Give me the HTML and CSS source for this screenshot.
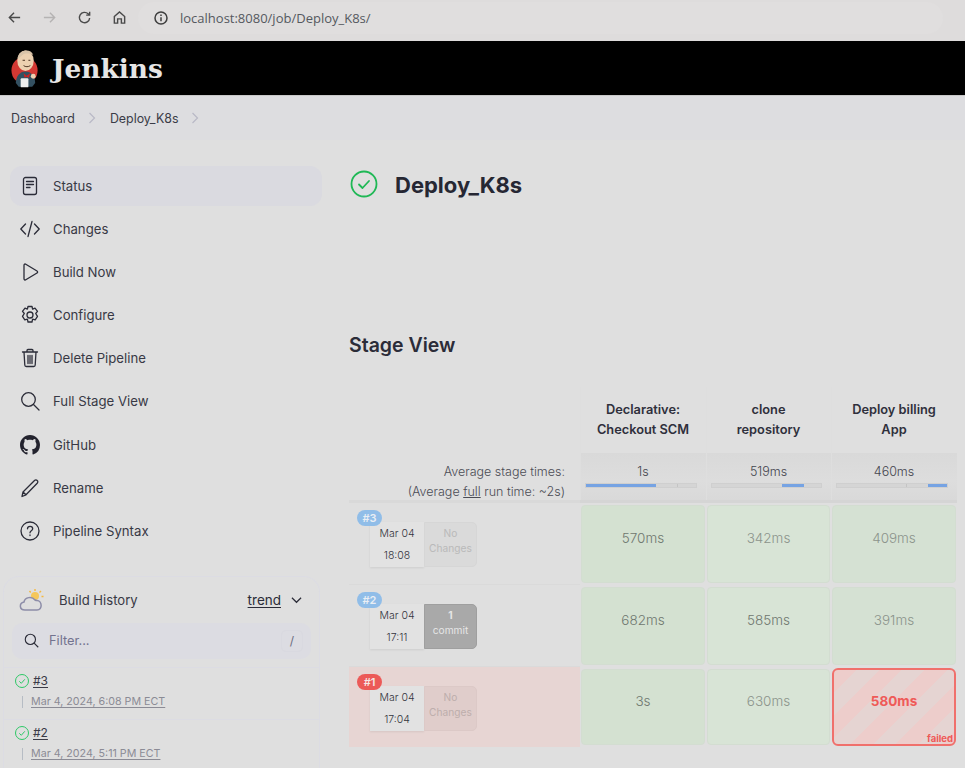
FILE: index.html
```html
<!doctype html>
<html>
  <head>
    <meta charset="utf-8">
    <meta name="viewport" content="width=device-width, initial-scale=1.0">
    <title>Deploy_K8s [Jenkins]</title>
    <link rel="stylesheet" href="styles.css">
  </head>
  <body>
    <!-- browser toolbar -->
    <div class="browser-bar">
      <svg class="nav-icon" viewBox="0 0 16 16"><path d="M14 8H2.500M7.500 3l-5 5 5 5"/></svg>
      <svg class="nav-icon nav-off" viewBox="0 0 16 16"><path d="M2 8h11.500M8.500 3l5 5-5 5"/></svg>
      <svg class="nav-icon" viewBox="0 0 16 16"><path d="M13.500 8.500a5.500 5.500 0 1 1-1.600-4.400L13.500 5.500M13.500 1.800v3.700H9.800"/></svg>
      <svg class="nav-icon" viewBox="0 0 16 16"><path d="M2.500 7L8 2l5.500 5v7H10V9.500H6V14H2.500z"/></svg>
      <div class="url-box">
        <svg class="url-info" viewBox="0 0 16 16"><circle cx="8" cy="8" r="6"/><path d="M8 7.200v4M8 4.500v1.400"/></svg>
        <span class="url-host">localhost:8080/job/Deploy_K8s/</span>
      </div>
    </div>

    <header class="top-bar">
      <svg class="logo" viewBox="0 0 30 40">
        <ellipse cx="14" cy="22" rx="13.500" ry="14" fill="#d33833"/>
        <path d="M5 35c0-7 4-12 10-12s10 5 10 12l-3 4H8z" fill="#335061"/>
        <path d="M13 25l3 2.500 4-2.500-1.500 4.500-2.500-1-2 1z" fill="#c22"/>
        <ellipse cx="15" cy="12" rx="8.500" ry="10.500" fill="#ecd0b0"/>
        <path d="M7 10c0-6 5-8.500 9-8.500 3 0 6 1.500 7 4.500-4-2-9-2-11 0-2 1-3 3-5 4z" fill="#d9c3a8"/>
        <path d="M12 11.500h2.500M18 11.500h2M13 17c2 1.500 5 1.500 7 0" stroke="#49311f" stroke-width="1" fill="none"/>
        <rect x="10" y="30" width="8" height="9.500" rx="1" fill="#eee"/>
        <circle cx="23" cy="28" r="2.500" fill="#ecd0b0"/>
      </svg>
      <span class="brand">Jenkins</span>
    </header>

    <nav class="crumbs">
      <span>Dashboard</span>
      <svg class="crumb-sep" viewBox="0 0 8 12"><path d="M1.500 1l5 5-5 5"/></svg>
      <span>Deploy_K8s</span>
      <svg class="crumb-sep" viewBox="0 0 8 12"><path d="M1.500 1l5 5-5 5"/></svg>
    </nav>

    <div class="page">
      <aside class="side">
        <ul class="tasks">
          <li class="task task-active">
            <svg class="ico" viewBox="0 0 20 20"><rect x="3.500" y="1.500" width="13" height="17" rx="2"/><path d="M6.500 5.500h7M6.500 8.500h7M6.500 11.500h3.500"/></svg>
            Status
          </li>
          <li class="task">
            <svg class="ico" viewBox="0 0 20 20"><path d="M5.500 5L0.800 10l4.700 5M14.500 5l4.700 5-4.700 5M12 2.500L8 17.500"/></svg>
            Changes
          </li>
          <li class="task">
            <svg class="ico" viewBox="0 0 20 20"><path d="M4 3.200c0-1 1-1.500 1.800-1L17 9c.8.500.8 1.500 0 2L5.800 17.800c-.8.500-1.800 0-1.800-1z"/></svg>
            Build Now
          </li>
          <li class="task">
            <svg class="ico" viewBox="0 0 20 20"><circle cx="10" cy="10" r="3"/><path d="M8 1.500h4l.6 2.600 2.400-1 2.500 3.300-1.800 2.100 1.800 2.900-2.300 3.500-2.600-.8-.6 2.900H8l-.6-2.900-2.600.8-2.300-3.500 1.800-2.900-1.800-2.100L5 3.100l2.400 1z"/></svg>
            Configure
          </li>
          <li class="task">
            <svg class="ico" viewBox="0 0 20 20"><path d="M2.500 4h15M7 4V2.500C7 2 7.500 1.500 8 1.500h4c.5 0 1 .5 1 1V4M4 4l.8 13c0 .8.700 1.500 1.500 1.500h7.400c.8 0 1.500-.7 1.500-1.500L16 4M8 7.500v8M10 7.500v8M12 7.500v8"/></svg>
            Delete Pipeline
          </li>
          <li class="task">
            <svg class="ico" viewBox="0 0 20 20"><circle cx="8.500" cy="8.500" r="6.800"/><path d="M13.500 13.500l5.500 5.500"/></svg>
            Full Stage View
          </li>
          <li class="task">
            <svg class="ico ico-solid" viewBox="0 0 16 16"><path d="M8 0C3.580 0 0 3.580 0 8c0 3.540 2.290 6.530 5.470 7.590.4.070.55-.17.55-.38 0-.19-.01-.82-.01-1.490-2.010.37-2.530-.49-2.690-.94-.09-.23-.48-.94-.82-1.130-.28-.15-.68-.52-.01-.53.63-.01 1.080.58 1.230.82.720 1.210 1.870.870 2.330.660.070-.520.280-.870.510-1.070-1.780-.2-3.640-.890-3.640-3.950 0-.870.310-1.590.820-2.150-.080-.2-.360-1.020.080-2.120 0 0 .670-.210 2.200.820.640-.180 1.320-.270 2-.270s1.360.090 2 .270c1.530-1.040 2.200-.820 2.200-.820.440 1.100.160 1.920.080 2.120.510.560.820 1.270.820 2.150 0 3.070-1.870 3.750-3.650 3.950.290.250.540.730.540 1.480 0 1.070-.010 1.930-.010 2.200 0 .210.150.460.550.380A8.010 8.010 0 0 0 16 8c0-4.420-3.580-8-8-8z"/></svg>
            GitHub
          </li>
          <li class="task">
            <svg class="ico" viewBox="0 0 20 20"><path d="M2 18.500l1-4.500L14.500 2.500c.8-.8 2-.8 2.700 0 .8.700.8 1.900 0 2.700L6 16.800zM3 14l3 2.800"/></svg>
            Rename
          </li>
          <li class="task">
            <svg class="ico" viewBox="0 0 20 20"><circle cx="10" cy="10" r="9"/><path d="M7.500 7.800c0-3.200 5.200-3.200 5.200 0 0 2-2.700 2-2.700 4M10 14v.6"/></svg>
            Pipeline Syntax
          </li>
        </ul>

        <section class="history">
          <div class="history-head">
            <svg class="weather" viewBox="0 0 26 24">
              <g stroke="#f5b83d" stroke-width="1.400" fill="none">
                <circle cx="16" cy="8" r="4" fill="#f5c75a" stroke="none"/>
                <path d="M16 1v2M22 3l-1.500 1.500M24.500 8.500h-2M10.500 3l1.200 1.500"/>
              </g>
              <path d="M6 22c-6 0-6-7-1-8 1-5 8-6 11-2 0 0 1 .5 2 .5 5 0 6 9.500 0 9.500z" fill="#dedede" stroke="#8d8da8" stroke-width="1.500"/>
            </svg>
            <span class="history-title">Build History</span>
            <span class="trend">trend</span>
            <svg class="chev" viewBox="0 0 12 8"><path d="M1 1.500l5 5 5-5"/></svg>
          </div>
          <div class="filter">
            <svg class="filter-ico" viewBox="0 0 20 20"><circle cx="8.500" cy="8.500" r="6.800"/><path d="M13.500 13.500l5.500 5.500"/></svg>
            <span class="filter-text">Filter...</span>
            <span class="filter-key">/</span>
          </div>
          <div class="build">
            <div class="build-top">
              <svg class="ok-small" viewBox="0 0 16 16"><circle cx="8" cy="8" r="6.500"/><path d="M5.300 8.300l2 2 3.500-4"/></svg>
              <span class="build-no">#3</span>
            </div>
            <div class="build-date">Mar 4, 2024, 6:08 PM ECT</div>
          </div>
          <div class="build">
            <div class="build-top">
              <svg class="ok-small" viewBox="0 0 16 16"><circle cx="8" cy="8" r="6.500"/><path d="M5.300 8.300l2 2 3.500-4"/></svg>
              <span class="build-no">#2</span>
            </div>
            <div class="build-date">Mar 4, 2024, 5:11 PM ECT</div>
          </div>
        </section>
      </aside>

      <main class="main">
        <div class="job-head">
          <svg class="ok-big" viewBox="0 0 28 28"><circle cx="14" cy="14" r="12.500"/><path d="M9 14.500l3.500 3.500 6.500-7"/></svg>
          <h1 class="job-title">Deploy_K8s</h1>
        </div>

        <h2 class="stage-title">Stage View</h2>

        <div class="stage">
          <!-- header -->
          <div class="corner"></div>
          <div class="col-head">Declarative:<br>Checkout SCM</div>
          <div class="col-head">clone<br>repository</div>
          <div class="col-head">Deploy billing<br>App</div>

          <!-- averages -->
          <div class="avg-label">Average stage times:<br>(Average <u>full</u> run time: ~2s)</div>
          <div class="avg">1s<div class="avg-bar tick-1"><div class="avg-fill fill-1"></div></div></div>
          <div class="avg">519ms<div class="avg-bar"><div class="avg-fill fill-2"></div></div></div>
          <div class="avg">460ms<div class="avg-bar tick-3"><div class="avg-fill fill-3"></div></div></div>

          <!-- #3 -->
          <div class="run">
            <span class="badge">#3</span>
            <div class="run-date">Mar 04<br>18:08</div>
            <div class="run-changes">No<br>Changes</div>
          </div>
          <div class="cell cell-a">570ms</div>
          <div class="cell cell-b cell-faint">342ms</div>
          <div class="cell cell-c cell-faint">409ms</div>

          <!-- #2 -->
          <div class="run">
            <span class="badge">#2</span>
            <div class="run-date">Mar 04<br>17:11</div>
            <div class="run-changes run-commit"><b>1</b><br>commit</div>
          </div>
          <div class="cell cell-a">682ms</div>
          <div class="cell cell-b">585ms</div>
          <div class="cell cell-c cell-faint">391ms</div>

          <!-- #1 -->
          <div class="run run-failed">
            <span class="badge badge-failed">#1</span>
            <div class="run-date">Mar 04<br>17:04</div>
            <div class="run-changes">No<br>Changes</div>
          </div>
          <div class="cell cell-a">3s</div>
          <div class="cell cell-b cell-faint">630ms</div>
          <div class="cell-failed">580ms<span class="failed-tag">failed</span></div>
        </div>
      </main>
    </div>
  </body>
</html>
```

FILE: styles.css
```css
html, body {
  height: 768px;
  overflow: hidden;
}
body {
  margin: 0;
  background-color: #dfdfdf;
  color: #2b2c38;
  font-family: Inter, "Noto Sans", sans-serif;
  font-size: 13px;
}

/* browser toolbar */
.browser-bar {
  display: flex;
  align-items: center;
  height: 41px;
  background-color: #dedcdc;
  padding: 0 0 6px 7px;
  box-sizing: border-box;
}
.nav-icon {
  width: 15px;
  height: 15px;
  margin-right: 20px;
  fill: none;
  stroke: #4a4a4a;
  stroke-width: 1.500;
}
.nav-off {
  stroke: #b5b3b3;
}
.url-box {
  display: flex;
  align-items: center;
  gap: 11px;
  margin-left: -9px;
  padding: 0 10px 0 15px;
  width: 780px;
  height: 32px;
  border-radius: 16px;
  background-color: #e0dede;
}
.url-info {
  width: 16px;
  height: 16px;
  fill: none;
  stroke: #3e3e3e;
  stroke-width: 1.500;
}
.url-host {
  font-family: "Open Sans", "Noto Sans", sans-serif;
  font-size: 13px;
  color: #55595f;
}

/* jenkins header */
.top-bar {
  display: flex;
  align-items: center;
  gap: 12px;
  height: 55px;
  padding-left: 11px;
  background-color: #000;
  border-bottom: 1px solid #c8c8c8;
  box-sizing: border-box;
}
.logo {
  width: 29px;
  height: 39px;
}
.brand {
  font-family: "DejaVu Serif", serif;
  font-weight: bold;
  font-size: 26.400px;
  color: #e6e6e6;
}

.crumbs {
  display: flex;
  align-items: center;
  height: 44px;
  padding-left: 11px;
  color: #3a3b47;
  font-size: 12.400px;
  background-color: #dddde0;
}
.crumb-sep {
  width: 8px;
  height: 12px;
  margin: 0 14px 0 13px;
  fill: none;
  stroke: #b9b9c6;
  stroke-width: 1.200;
}

.page {
  display: grid;
  grid-template-columns: 349px 1fr;
  background-color: #dfdfdf;
}

/* side panel */
.side {
  padding-top: 26px;
}
.tasks {
  list-style: none;
  margin: 0 27px 0 10px;
  padding: 0;
}
.task {
  display: flex;
  align-items: center;
  gap: 13px;
  height: 40px;
  margin-bottom: 3.100px;
  padding-left: 10px;
  border-radius: 12px;
  font-size: 13.200px;
  color: #383945;
}
.task-active {
  background-color: #dadae0;
}
.ico {
  width: 20px;
  height: 20px;
  fill: none;
  stroke: #2b2c38;
  stroke-width: 1.300;
  stroke-linecap: round;
  stroke-linejoin: round;
}
.ico-solid {
  fill: #23232e;
  stroke: none;
}

/* build history */
.history {
  margin: 25px 29px 0 3px;
  border: 1.500px solid #dcdce3;
  border-bottom: none;
  border-radius: 16px 16px 0 0;
}
.history-head {
  display: flex;
  align-items: center;
  height: 46px;
  padding: 0 17px 0 15px;
}
.weather {
  width: 26px;
  height: 24px;
  margin-right: 14px;
}
.history-title {
  flex: 1;
  font-size: 13.100px;
  color: #383945;
}
.trend {
  font-size: 13.500px;
  text-decoration: underline;
  text-underline-offset: 2px;
  margin-right: 10px;
}
.chev {
  width: 11px;
  height: 8px;
  fill: none;
  stroke: #2b2c38;
  stroke-width: 1.300;
}
.filter {
  display: flex;
  align-items: center;
  height: 36px;
  margin: 0 8px;
  padding: 0 8px 0 12px;
  border-radius: 10px;
  background-color: #dcdce2;
}
.filter-ico {
  width: 15px;
  height: 15px;
  fill: none;
  stroke: #2b2c38;
  stroke-width: 1.500;
}
.filter-text {
  flex: 1;
  margin-left: 10px;
  color: #73738f;
  font-size: 12.800px;
}
.filter-key {
  width: 20px;
  height: 20px;
  line-height: 20px;
  text-align: center;
  border: 1px solid #d9d9e0;
  border-radius: 5px;
  color: #6b6b80;
  font-size: 12px;
}
.build {
  margin-top: 8px;
  padding: 0 0 0 10px;
  border-top: 1px solid #dcdce3;
  height: 51px;
}
.build-top {
  display: flex;
  align-items: center;
  gap: 3px;
  padding-top: 5px;
}
.ok-small {
  width: 16px;
  height: 16px;
  fill: none;
  stroke: #2ec866;
  stroke-width: 1;
}
.build-no {
  font-size: 12px;
  text-decoration: underline;
  text-underline-offset: 2px;
  color: #3a3b47;
}
.build-date {
  margin: 6px 0 0 8px;
  padding-left: 9px;
  font-size: 10.700px;
  color: #8b8b95;
  text-decoration: underline;
  text-underline-offset: 2px;
  position: relative;
}
.build-date::before {
  content: "";
  position: absolute;
  left: 0;
  top: 1px;
  height: 12px;
  border-left: 1px solid #b6bcc4;
}
.build + .build {
  margin-top: 0;
}

/* main */
.main {
  padding-top: 27px;
}
.job-head {
  display: flex;
  align-items: center;
  gap: 17px;
  height: 36px;
  margin-left: 1px;
}
.ok-big {
  margin-top: -2px;
  width: 28px;
  height: 28px;
  fill: none;
  stroke: #1fb855;
  stroke-width: 1.800;
  stroke-linecap: round;
  stroke-linejoin: round;
}
.job-title {
  margin: 0;
  font-size: 22px;
  font-weight: 700;
  color: #262733;
}
.stage-title {
  margin: 130px 0 0;
  height: 28px;
  font-size: 19.500px;
  font-weight: 600;
  color: #2b2c38;
}
.stage {
  display: grid;
  grid-template-columns: 231px 126px 125px 126px;
  grid-template-rows: 66px 50px 82px 82px 80px;
  margin-top: 26px;
}
.corner {
  background-color: transparent;
}
.col-head {
  display: flex;
  align-items: center;
  justify-content: center;
  text-align: center;
  font-size: 12.800px;
  font-weight: 600;
  line-height: 20px;
  color: #2f303c;
  box-shadow: inset 1px 0 0 #dedede;
}
.avg-label {
  padding: 9px 15px 0 0;
  text-align: right;
  font-size: 12.500px;
  font-weight: 300;
  line-height: 20px;
  color: #4b4c55;
  border-bottom: 3px solid #d9d9d9;
}
.avg {
  padding-top: 11px;
  text-align: center;
  font-size: 12.500px;
  font-weight: 300;
  color: #44454e;
  background-image: linear-gradient(#d9d9d9, #dddddd 60%, #d9d9d9);
  box-shadow: inset 1px 0 0 #dedede;
  border-bottom: 3px solid #d5d5d5;
}
.avg-bar {
  position: relative;
  height: 3px;
  margin: 4px 9px 0 5px;
  background-color: #d5d5d5;
  border: 1px solid #cfcfcf;
}
.avg-fill {
  position: absolute;
  top: 0;
  height: 100%;
  background-color: #76a3e3;
}
.fill-1 {
  left: 0;
  width: 64%;
}
.fill-2 {
  left: 64%;
  width: 20%;
}
.fill-3 {
  left: 83%;
  width: 17%;
}
.tick-1::after,
.tick-3::after {
  content: "";
  position: absolute;
  top: 0;
  height: 100%;
  border-left: 1px solid #c4c4c4;
}
.tick-1::after {
  left: 83%;
}
.tick-3::after {
  left: 63%;
}

/* run rows */
.run {
  position: relative;
  display: flex;
  align-items: flex-start;
  padding: 19px 0 0 21px;
  border-bottom: 1px solid #dadada;
  box-sizing: border-box;
}
.run-failed {
  background-color: #e7d5d3;
  border-bottom: none;
}
.badge {
  position: absolute;
  left: 8px;
  top: 7px;
  width: 25px;
  height: 16px;
  line-height: 16px;
  border-radius: 8px;
  background-color: #90bde8;
  color: #e9eef4;
  font-size: 11px;
  font-weight: 600;
  text-align: center;
}
.badge-failed {
  background-color: #ec5a58;
  color: #f6e6e6;
}
.run-date {
  width: 54px;
  height: 45px;
  box-sizing: border-box;
  padding-top: 1px;
  text-align: center;
  font-size: 10.500px;
  font-weight: 300;
  line-height: 21.500px;
  color: #33343d;
  background-color: #e2e2e2;
  box-shadow: 0 1px 2px rgba(0,0,0,0.08);
}
.run-changes {
  width: 53px;
  height: 45px;
  box-sizing: border-box;
  padding-top: 3px;
  text-align: center;
  font-size: 10.200px;
  line-height: 15px;
  color: #b9b9b9;
  background-color: #dadada;
  border: 1px solid #d6d6d6;
  border-radius: 0 5px 5px 0;
}
.run-failed .run-changes {
  color: #bdaeac;
  background-color: #e0cdcb;
  border-color: #dcc9c7;
}
.run-commit {
  color: #e6e6e6;
  background-color: #a9a9a9;
  border-color: #9f9f9f;
}
.cell {
  display: flex;
  align-items: center;
  justify-content: center;
  margin: 2px 1px;
  padding-bottom: 12px;
  border: 1px solid #d3ddd1;
  border-radius: 4px;
  font-size: 13.500px;
  font-weight: 300;
  color: #6f776f;
  box-sizing: border-box;
}
.cell-a {
  background-color: #d4e1d1;
}
.cell-b {
  background-color: #d8e4d6;
}
.cell-c {
  background-color: #d5e1d3;
}
.cell-faint {
  color: #8b938b;
}
.cell-failed {
  position: relative;
  display: flex;
  align-items: center;
  justify-content: center;
  margin: 1px;
  padding-bottom: 12px;
  box-sizing: border-box;
  border: 2px solid #f0706c;
  border-radius: 6px;
  font-size: 13.500px;
  font-weight: 700;
  color: #ef5a58;
  background-image: repeating-linear-gradient(135deg, #edcdcb 0, #edcdcb 16px, #e5d4d2 16px, #e5d4d2 32px);
}
.failed-tag {
  position: absolute;
  right: 1px;
  bottom: 0;
  font-size: 9.500px;
  font-weight: 700;
  color: #ef5a58;
}
```
